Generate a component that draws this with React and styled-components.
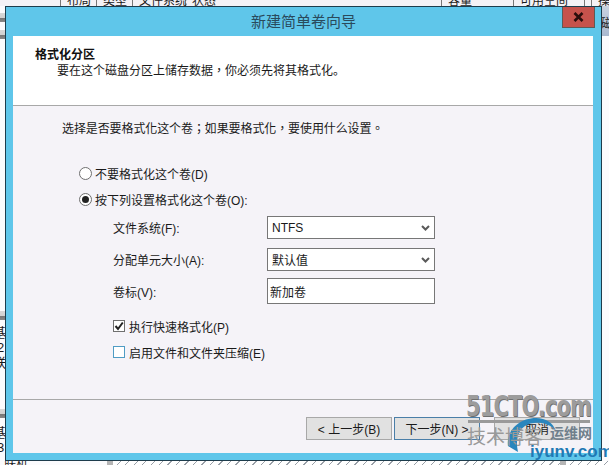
import React from 'react'
import styled, { createGlobalStyle } from 'styled-components'

const FONT = '"Liberation Sans", "Noto Sans CJK SC", sans-serif'
const FONT_TC = '"Liberation Sans", "Noto Sans CJK TC", sans-serif'

const Global = createGlobalStyle`
  html, body { margin: 0; padding: 0; background: #fff; overflow: hidden; }
  * { box-sizing: border-box; }
`

const Desktop = styled.div`
  position: relative;
  width: 609px;
  height: 465px;
  overflow: hidden;
  background: #fbfbfd;
  font-family: ${FONT};
  font-size: 12px;
  color: #1a1a1a;
`

/* the disk management table behind the wizard */
const TableHead = styled.div`
  display: flex;
  height: 6px;
  overflow: hidden;
  background: #f4f2f6;
`
const HeadCell = styled.div`
  flex: none;
  width: ${p => p.$w}px;
  height: 6px;
  padding-left: 6px;
  border-right: 1px solid #777;
  line-height: 2px;
  font-size: 12px;
  white-space: nowrap;
`
const LeftStrip = styled.div`
  display: flex;
  flex-direction: column;
  width: 6px;
  height: 459px;
  padding-top: 4px;
  overflow: hidden;
`
const DiskIcon = styled.div`
  flex: none;
  width: 6px;
  height: 9px;
  margin-top: ${p => p.$top}px;
  background: linear-gradient(#d8d8d8, #d0d0d0 60%, #777 60%, #888);
`
const StripText = styled.div`
  flex: none;
  height: 15px;
  margin-top: ${p => p.$top || 0}px;
  margin-left: ${p => p.$left || 0}px;
  line-height: 15px;
  font-size: 13px;
  white-space: nowrap;
`
const RightHeader = styled.div`
  position: absolute;
  top: 6px;
  left: 601px;
  width: 8px;
  height: 30px;
  padding-top: 10px;
  background: linear-gradient(#c9d2e0, #a9b8cf);
  overflow: hidden;
  font-size: 12px;
  line-height: 16px;
  color: #222;
`
const BottomStrip = styled.div`
  position: absolute;
  left: 0;
  right: 0;
  top: 461px;
  height: 4px;
  overflow: hidden;
  display: flex;
`
const BottomLabel = styled.div`
  width: 107px;
  padding-left: 4px;
  line-height: 7px;
  font-size: 12px;
  white-space: nowrap;
`
const ScrollBlock = styled.div`
  width: 6px;
  background: #b5b5b5;
`
const Hatch = styled.div`
  flex: ${p => (p.$grow ? 1 : 'none')};
  width: ${p => p.$w || 0}px;
  background: repeating-linear-gradient(135deg, #fff 0 5px, #9aa0a8 5px 6px);
`

/* wizard window */
const Wizard = styled.div`
  position: absolute;
  left: 5px;
  top: 6px;
  width: 597px;
  height: 455px;
  display: flex;
  flex-direction: column;
  background: #5fc6ea;
  border: 1px solid #1d3c4c;
`
const TitleBar = styled.div`
  position: relative;
  flex: none;
  height: 29px;
  line-height: 30px;
  text-align: center;
  font-size: 15px;
  color: #2a4a5c;
`
const CloseButton = styled.div`
  position: absolute;
  top: 0;
  right: 6px;
  width: 33px;
  height: 21px;
  display: flex;
  align-items: center;
  justify-content: center;
  background: #c6524c;
  border: 1px solid #5e5a58;
  border-top: none;
`
const Client = styled.div`
  flex: none;
  height: 417px;
  margin: 0 8px 0 7px;
  display: flex;
  flex-direction: column;
  background: #f5f3f8;
`
const Header = styled.div`
  flex: none;
  height: 70px;
  padding: 11px 0 0 22px;
  background: #fff;
  border-bottom: 1px solid #a8a8a8;
`
const HeaderTitle = styled.div`
  font-weight: 700;
  font-size: 12px;
  line-height: 16px;
  color: #111;
`
const HeaderSub = styled.div`
  padding-left: 22px;
  line-height: 17px;
  font-size: 12px;
`
const Punct = styled.span`
  font-family: ${FONT_TC};
`
const Body = styled.div`
  flex: none;
  height: 294px;
  padding: 15px 0 0 49px;
  border-bottom: 1px solid #a8a8a8;
`
const Prompt = styled.div`
  line-height: 16px;
  margin-bottom: 28px;
  font-family: ${FONT_TC};
  letter-spacing: -0.1px;
`
const OptionRow = styled.label`
  display: flex;
  align-items: center;
  gap: 3px;
  height: 16px;
  margin-left: 17px;
  margin-bottom: ${p => p.$mb}px;
`
const Radio = styled.span`
  position: relative;
  flex: none;
  width: 13px;
  height: 13px;
  border-radius: 50%;
  border: 1px solid #6f6f6f;
  background: #fff;
  &::after {
    content: '';
    display: ${p => (p.$on ? 'block' : 'none')};
    position: absolute;
    left: 2px;
    top: 2px;
    width: 7px;
    height: 7px;
    border-radius: 50%;
    background: #222;
  }
`
const FieldRow = styled.div`
  display: flex;
  align-items: center;
  height: ${p => p.$h}px;
  margin-left: 51px;
  margin-bottom: ${p => p.$mb}px;
`
const FieldLabel = styled.div`
  flex: none;
  width: 154px;
`
const Select = styled.div`
  flex: none;
  width: 168px;
  height: 100%;
  display: flex;
  align-items: center;
  justify-content: space-between;
  padding: 0 4px;
  background: #fff;
  border: 1px solid #777;
`
const TextField = styled(Select)`
  padding: 0 2px;
  justify-content: flex-start;
  font-size: 12px;
`
const CheckRow = styled.label`
  display: flex;
  align-items: center;
  gap: 4px;
  height: 16px;
  margin-left: 51px;
  margin-bottom: ${p => p.$mb}px;
`
const CheckBox = styled.span`
  flex: none;
  width: 12px;
  height: 12px;
  display: flex;
  align-items: center;
  justify-content: center;
  background: #fff;
  border: 1px solid ${p => (p.$blue ? '#4f9cc4' : '#6f6f6f')};
`
const Footer = styled.div`
  flex: 1;
  display: flex;
  justify-content: flex-start;
  padding: 17px 0 0 293px;
`
const Button = styled.div`
  flex: none;
  width: 86px;
  height: 23px;
  margin-right: ${p => p.$mr}px;
  display: flex;
  align-items: center;
  justify-content: center;
  gap: 4px;
  background: #e1e1e1;
  border: 1px solid ${p => (p.$primary ? '#4a7ea8' : '#a8a8a8')};
  font-size: 12px;
`

/* watermarks over the shot */
const Mark51 = styled.div`
  position: absolute;
  left: 466px;
  top: 390px;
  font-family: "DejaVu Sans Condensed", "DejaVu Sans", sans-serif;
  font-weight: 700;
  font-size: 29px;
  line-height: 32px;
  letter-spacing: -1px;
  color: #9c9c9c;
  text-shadow: 1px 1px 0 #6f6f6f;
  transform: scaleX(0.8);
  transform-origin: left;
  white-space: nowrap;
`
const MarkRule = styled.div`
  position: absolute;
  left: 468px;
  top: 420px;
  width: 122px;
  height: 3px;
  background: #9a9a9a;
`
const MarkBlog = styled.div`
  position: absolute;
  left: 467px;
  top: 425px;
  font-size: 19px;
  line-height: 26px;
  color: #9a9a9a;
  white-space: nowrap;
`
const MarkYun = styled.div`
  position: absolute;
  left: 550px;
  top: 423px;
  font-size: 14px;
  line-height: 20px;
  font-weight: 700;
  color: #6f7f8c;
  white-space: nowrap;
`
const MarkIyunv = styled.div`
  position: absolute;
  left: 530px;
  top: 442px;
  font-size: 17px;
  line-height: 20px;
  font-weight: 700;
  color: #1f79b4;
  white-space: nowrap;
`
const Swirl = styled.svg`
  position: absolute;
  left: 504px;
  top: 416px;
`

const Chevron = () => (
  <svg width="9" height="6" viewBox="0 0 9 6">
    <path d="M1 1l3.5 3.5L8 1" fill="none" stroke="#5a5a5a" strokeWidth="2" />
  </svg>
)

const columns = [
  { w: 61, label: '' },
  { w: 36, label: '布局' },
  { w: 36, label: '类型' },
  { w: 53, label: '文件系统' },
  { w: 256, label: '状态' },
  { w: 72, label: '容量' },
  { w: 71, label: '可用空间' },
  { w: 5, label: '' },
  { w: 21, label: '操' },
]

export default function App() {
  return (
    <Desktop>
      <Global />
      <TableHead>
        {columns.map((c, i) => (
          <HeadCell key={i} $w={c.w}>{c.label}</HeadCell>
        ))}
      </TableHead>
      <LeftStrip>
        <DiskIcon $top={3} />
        <DiskIcon $top={8} />
        <DiskIcon $top={272} />
        <StripText $top={5} $left={-7}>基</StripText>
        <StripText $left={-3}>2</StripText>
        <StripText $left={-7}>联</StripText>
        <DiskIcon $top={39} />
        <StripText $top={7} $left={-7}>基</StripText>
        <StripText $left={-3}>3</StripText>
      </LeftStrip>
      <RightHeader>磁</RightHeader>
      <BottomStrip>
        <BottomLabel>联机</BottomLabel>
        <ScrollBlock />
        <Hatch $grow />
        <ScrollBlock />
        <Hatch $w={43} />
      </BottomStrip>

      <Wizard>
        <TitleBar>
          新建简单卷向导
          <CloseButton>
            <svg width="11" height="10" viewBox="0 0 11 10">
              <path d="M1.5 1l8 8M9.5 1l-8 8" stroke="#2a0d0c" strokeWidth="2.6" />
            </svg>
          </CloseButton>
        </TitleBar>
        <Client>
          <Header>
            <HeaderTitle>格式化分区</HeaderTitle>
            <HeaderSub>要在这个磁盘分区上储存数据<Punct>，</Punct>你必须先将其格式化。</HeaderSub>
          </Header>
          <Body>
            <Prompt>选择是否要格式化这个卷；如果要格式化，要使用什么设置。</Prompt>
            <OptionRow $mb={10}>
              <Radio />
              不要格式化这个卷(D)
            </OptionRow>
            <OptionRow $mb={9}>
              <Radio $on />
              按下列设置格式化这个卷(O):
            </OptionRow>
            <FieldRow $h={23} $mb={9}>
              <FieldLabel>文件系统(F):</FieldLabel>
              <Select>NTFS<Chevron /></Select>
            </FieldRow>
            <FieldRow $h={23} $mb={7}>
              <FieldLabel>分配单元大小(A):</FieldLabel>
              <Select>默认值<Chevron /></Select>
            </FieldRow>
            <FieldRow $h={26} $mb={14}>
              <FieldLabel>卷标(V):</FieldLabel>
              <TextField>新加卷</TextField>
            </FieldRow>
            <CheckRow $mb={10}>
              <CheckBox>
                <svg width="10" height="10" viewBox="0 0 10 10">
                  <path d="M1.5 5l2.5 3L8.8 1.5" fill="none" stroke="#222" strokeWidth="2" />
                </svg>
              </CheckBox>
              执行快速格式化(P)
            </CheckRow>
            <CheckRow $mb={0}>
              <CheckBox $blue />
              启用文件和文件夹压缩(E)
            </CheckRow>
          </Body>
          <Footer>
            <Button $mr={2}>&lt; 上一步(B)</Button>
            <Button $mr={14} $primary>下一步(N) &gt;</Button>
            <Button $mr={0}>取消</Button>
          </Footer>
        </Client>
      </Wizard>

      <Mark51>51CTO.com</Mark51>
      <MarkRule />
      <Swirl width="70" height="50" viewBox="0 0 70 50">
        <path d="M4 30C2 14 16 2 32 2c10 0 17 5 20 13C46 8 38 6 30 7 18 8 10 18 14 36z" fill="#2a86bd" />
      </Swirl>
      <MarkBlog>技术博客</MarkBlog>
      <MarkYun>运维网</MarkYun>
      <MarkIyunv>iyunv.com</MarkIyunv>
    </Desktop>
  )
}
